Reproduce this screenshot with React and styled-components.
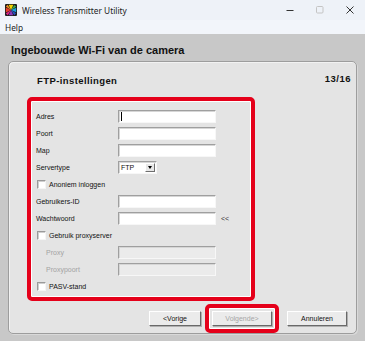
import React from 'react';
import styled, { createGlobalStyle } from 'styled-components';

const GlobalStyle = createGlobalStyle`
  html, body {
    margin: 0;
    padding: 0;
    background: #c8c8c8;
  }
  body {
    font-family: "Liberation Sans", Arial, sans-serif;
    color: #111;
  }
`;

const RED = '#e5001a';

const Window = styled.div`
  width: 365px;
  height: 341px;
  display: flex;
  flex-direction: column;
  overflow: hidden;
  background: #c8c8c8;
`;

const TitleBar = styled.div`
  height: 20px;
  display: flex;
  align-items: center;
  padding-left: 5px;
  background: #eef2f8;
`;

const Title = styled.span`
  margin-left: 5px;
  font-family: "Noto Sans", "Open Sans", sans-serif;
  font-size: 8.3px;
  color: #1c1c1c;
  flex: 1;
`;

const Controls = styled.div`
  display: flex;
  height: 20px;
`;

const ControlCell = styled.div`
  width: 30px;
  display: flex;
  align-items: center;
  justify-content: center;
`;

const MenuBar = styled.div`
  height: 14px;
  display: flex;
  align-items: center;
  padding-left: 5px;
  background: #f2f5fa;
`;

const MenuItem = styled.span`
  font-family: "Noto Sans", "Open Sans", sans-serif;
  font-size: 8.3px;
  color: #1c1c1c;
`;

const Heading = styled.div`
  height: 27px;
  box-sizing: border-box;
  padding: 4px 11px 0;
  display: flex;
  align-items: center;
  font-size: 11px;
  font-weight: bold;
  color: #111;
`;

const Panel = styled.div`
  margin: 0 8px;
  height: 273px;
  box-sizing: border-box;
  background: #e4e4e4;
  border: 1px solid #9d9d9d;
  border-radius: 5px;
  box-shadow: inset 1px 1px 0 #f2f2f2, 1px 1px 0 #d9d9d9;
  display: flex;
  flex-direction: column;
`;

const PanelHeader = styled.div`
  height: 35px;
  box-sizing: border-box;
  padding: 12px 5px 0 28px;
  display: flex;
  justify-content: space-between;
  align-items: flex-start;
`;

const PanelTitle = styled.span`
  font-size: 9.5px;
  line-height: 13px;
  font-weight: bold;
  letter-spacing: 0.4px;
`;

const Counter = styled.span`
  font-size: 9.5px;
  line-height: 10px;
  font-weight: bold;
  letter-spacing: 0.5px;
`;

const FormBox = styled.div`
  margin-left: 18px;
  width: 228px;
  height: 204px;
  box-sizing: border-box;
  border: 4px solid ${RED};
  border-radius: 5px;
  box-shadow: inset 0 0 0 1px #fff;
  padding: 7px 0 0 5px;
  display: flex;
  flex-direction: column;
`;

const Row = styled.div`
  height: 17px;
  display: flex;
  align-items: center;
`;

const Label = styled.span`
  width: ${({ $indent }) => 82 - ($indent ? 10 : 0)}px;
  padding-left: ${({ $indent }) => ($indent ? 10 : 0)}px;
  font-size: 7px;
  color: ${({ $disabled }) => ($disabled ? '#a3a3a3' : '#111')};
`;

const Field = styled.div`
  position: relative;
  width: 98px;
  height: 13px;
  box-sizing: border-box;
  background: ${({ $disabled }) => ($disabled ? '#ebebeb' : '#fff')};
  border-style: solid;
  border-width: 1px;
  border-color: #9f9f9f #f7f7f7 #f7f7f7 #9f9f9f;
  box-shadow: inset 1px 1px 0 #d6d6d6;
`;

const Caret = styled.span`
  position: absolute;
  left: 2px;
  top: 1px;
  width: 1px;
  height: 9px;
  background: #000;
`;

const Select = styled.div`
  width: 39px;
  height: 13px;
  box-sizing: border-box;
  background: #fff;
  border-style: solid;
  border-width: 1px;
  border-color: #9f9f9f #f7f7f7 #f7f7f7 #9f9f9f;
  box-shadow: inset 1px 1px 0 #d6d6d6;
  display: flex;
  align-items: center;
  justify-content: space-between;
  padding: 1px 1px 1px 2px;
  font-size: 7px;
`;

const DropButton = styled.span`
  width: 10px;
  height: 9px;
  box-sizing: border-box;
  background: #e8e8e8;
  border-style: solid;
  border-width: 1px;
  border-color: #fff #6e6e6e #6e6e6e #fff;
  display: flex;
  align-items: center;
  justify-content: center;
`;

const Arrow = styled.span`
  width: 0;
  height: 0;
  border-left: 2.5px solid transparent;
  border-right: 2.5px solid transparent;
  border-top: 3px solid #000;
`;

const CheckRow = styled(Row)`
  gap: 3px;
  padding-left: 1px;
`;

const CheckBox = styled.span`
  width: 9px;
  height: 9px;
  box-sizing: border-box;
  background: #fff;
  border-style: solid;
  border-width: 1px;
  border-color: #9a9a9a #f5f5f5 #f5f5f5 #9a9a9a;
  box-shadow: inset 1px 1px 0 #cfcfcf;
`;

const CheckText = styled.span`
  font-size: 7px;
  color: #111;
`;

const Hint = styled.span`
  margin-left: 5px;
  font-size: 7px;
  color: #333;
`;

const ButtonRow = styled.div`
  margin-top: 3px;
  height: 29px;
  display: flex;
  align-items: center;
  justify-content: flex-end;
  padding-right: 9px;
`;

const Button = styled.div`
  width: ${({ $width }) => $width || 60}px;
  height: 15px;
  box-sizing: border-box;
  background: #ebebeb;
  border-style: solid;
  border-width: 1px;
  border-color: #fff #696969 #696969 #fff;
  box-shadow: 1px 1px 0 #b0b0b0;
  display: flex;
  align-items: center;
  justify-content: center;
  font-size: 7px;
  color: ${({ $disabled }) => ($disabled ? '#a6a6a6' : '#111')};
  margin-left: ${({ $gap }) => $gap || 0}px;
`;

const ButtonHighlight = styled.div`
  margin-left: 4px;
  height: 29px;
  box-sizing: border-box;
  border: 4px solid ${RED};
  border-radius: 5px;
  box-shadow: inset 0 0 0 1px #fff;
  padding: 3px;
  display: flex;
  align-items: center;
`;

const AppIcon = () => (
  <svg width="12" height="12" viewBox="0 0 12 12">
    <rect width="12" height="12" rx="1" fill="#1d1d1d" />
    <polygon points="6,6 3.6,0.8 8.4,0.8" fill="#f0d400" />
    <polygon points="6,6 9.5,1 11.2,2.8" fill="#3fb34a" />
    <polygon points="6,6 11.2,3.8 11.2,8.2" fill="#1aa0dc" />
    <polygon points="6,6 11,9.2 9.2,11.2" fill="#2a4fc4" />
    <polygon points="6,6 8.2,11.2 3.8,11.2" fill="#8b3ab8" />
    <polygon points="6,6 2.8,11.2 0.8,9.4" fill="#e2258a" />
    <polygon points="6,6 0.8,8.4 0.8,3.6" fill="#e63b2b" />
    <polygon points="6,6 0.8,2.6 2.6,0.8" fill="#f28a1e" />
  </svg>
);

const TextRow = ({ label, disabled, indent, caret, hint }) => (
  <Row>
    <Label $disabled={disabled} $indent={indent}>
      {label}
    </Label>
    <Field $disabled={disabled}>{caret && <Caret />}</Field>
    {hint && <Hint>{hint}</Hint>}
  </Row>
);

const Check = ({ label }) => (
  <CheckRow>
    <CheckBox />
    <CheckText>{label}</CheckText>
  </CheckRow>
);

export default function App() {
  return (
    <>
      <GlobalStyle />
      <Window>
        <TitleBar>
          <AppIcon />
          <Title>Wireless Transmitter Utility</Title>
          <Controls>
            <ControlCell>
              <svg width="8" height="8" viewBox="0 0 8 8">
                <line x1="0.5" y1="4.5" x2="7.5" y2="4.5" stroke="#333" strokeWidth="1" />
              </svg>
            </ControlCell>
            <ControlCell>
              <svg width="8" height="8" viewBox="0 0 8 8">
                <rect x="0.5" y="0.5" width="6.5" height="6.5" rx="1" fill="none" stroke="#c4c4c4" strokeWidth="1" />
              </svg>
            </ControlCell>
            <ControlCell>
              <svg width="8" height="8" viewBox="0 0 8 8">
                <path d="M0.5 0.5 L7.5 7.5 M7.5 0.5 L0.5 7.5" stroke="#333" strokeWidth="1" />
              </svg>
            </ControlCell>
          </Controls>
        </TitleBar>
        <MenuBar>
          <MenuItem>Help</MenuItem>
        </MenuBar>
        <Heading>Ingebouwde Wi-Fi van de camera</Heading>
        <Panel>
          <PanelHeader>
            <PanelTitle>FTP-instellingen</PanelTitle>
            <Counter>13/16</Counter>
          </PanelHeader>
          <FormBox>
            <TextRow label="Adres" caret />
            <TextRow label="Poort" />
            <TextRow label="Map" />
            <Row>
              <Label>Servertype</Label>
              <Select>
                FTP
                <DropButton>
                  <Arrow />
                </DropButton>
              </Select>
            </Row>
            <Check label="Anoniem inloggen" />
            <TextRow label="Gebruikers-ID" />
            <TextRow label="Wachtwoord" hint="<<" />
            <Check label="Gebruik proxyserver" />
            <TextRow label="Proxy" disabled indent />
            <TextRow label="Proxypoort" disabled indent />
            <Check label="PASV-stand" />
          </FormBox>
          <ButtonRow>
            <Button $width={52}>&lt;Vorige</Button>
            <ButtonHighlight>
              <Button $disabled>Volgende&gt;</Button>
            </ButtonHighlight>
            <Button $gap={8}>Annuleren</Button>
          </ButtonRow>
        </Panel>
      </Window>
    </>
  );
}
